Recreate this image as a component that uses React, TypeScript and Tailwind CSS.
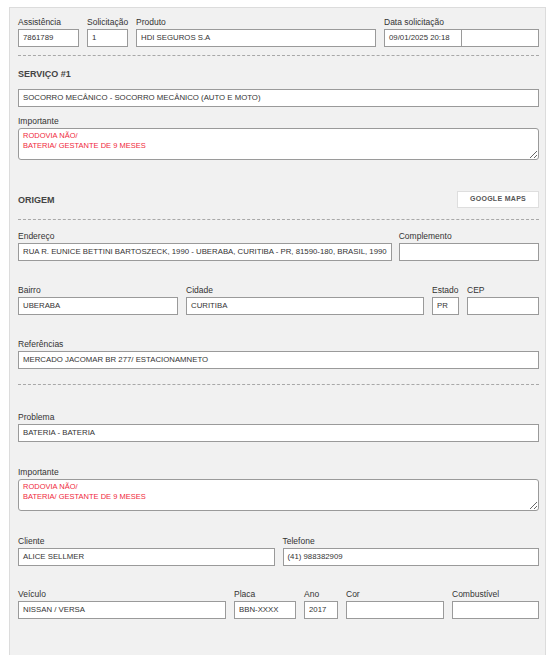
const font = { fontFamily: '"Liberation Sans", Arial, sans-serif' };

function Label({ children }: { children?: React.ReactNode }) {
  return (
    <div className="h-[13px] text-[8.5px] leading-[13px] text-[#333] whitespace-nowrap">
      {children}
    </div>
  );
}

function Box({ value, className = "" }: { value?: string; className?: string }) {
  return (
    <div
      className={`h-[18px] border border-[#9a9a9a] bg-white px-[4px] text-[7.8px] leading-[16px] text-[#333] whitespace-nowrap overflow-hidden ${className}`}
    >
      {value}
    </div>
  );
}

function Field({
  label,
  value,
  className = "",
}: {
  label?: string;
  value?: string;
  className?: string;
}) {
  return (
    <div className={`flex flex-col ${className}`}>
      <Label>{label}</Label>
      <Box value={value} />
    </div>
  );
}

function Important({ className = "" }: { className?: string }) {
  return (
    <div className={className}>
      <Label>Importante</Label>
      <textarea
        readOnly
        defaultValue={"RODOVIA NÃO/\nBATERIA/ GESTANTE DE 9 MESES"}
        className="block h-[32px] w-full resize-y rounded-[3px] border border-[#9a9a9a] bg-white px-[4px] pt-[2px] text-[7.5px] leading-[10px] text-[#f0283c] outline-none"
        style={font}
      />
    </div>
  );
}

function Dashed({ className = "" }: { className?: string }) {
  return <div className={`border-t border-dashed border-[#a8a8a8] ${className}`} />;
}

export default function App() {
  return (
    <div className="min-h-screen bg-white pl-[9px] pr-[6px] pt-[7px]" style={font}>
      <div className="min-h-[660px] border border-[#dcdcdc] bg-[#f1f1f1] pl-[8px] pr-[6px] pt-[8px]">
        {/* Header */}
        <div className="flex gap-[8px]">
          <Field label="Assistência" value="7861789" className="w-[61px]" />
          <Field label="Solicitação" value="1" className="w-[41px]" />
          <Field label="Produto" value="HDI SEGUROS S.A" className="flex-1" />
          <div className="flex w-[155px] flex-col">
            <Label>Data solicitação</Label>
            <div className="flex">
              <Box value="09/01/2025 20:18" className="w-[78px]" />
              <Box className="flex-1 border-l-0" />
            </div>
          </div>
        </div>

        <Dashed className="mt-[8px]" />

        {/* Serviço */}
        <div className="mt-[12px] h-[12px] text-[9px] font-bold leading-[12px] text-[#444]">
          SERVIÇO #1
        </div>
        <Box value="SOCORRO MECÂNICO - SOCORRO MECÂNICO (AUTO E MOTO)" className="mt-[9px]" />
        <Important className="mt-[8px]" />

        {/* Origem */}
        <div className="mt-[31px] flex items-center justify-between">
          <div className="text-[9px] font-bold leading-[12px] text-[#444]">ORIGEM</div>
          <div className="flex h-[17px] w-[82px] items-center justify-center border border-[#dedede] bg-white text-[7px] font-bold tracking-[0.3px] text-[#555]">
            GOOGLE MAPS
          </div>
        </div>

        <Dashed className="mt-[11px]" />

        <div className="mt-[10px] flex gap-[7px]">
          <Field
            label="Endereço"
            value="RUA R. EUNICE BETTINI BARTOSZECK, 1990 - UBERABA, CURITIBA - PR, 81590-180, BRASIL, 1990"
            className="flex-1"
          />
          <Field label="Complemento" className="w-[141px]" />
        </div>

        <div className="mt-[23px] flex gap-[8px]">
          <Field label="Bairro" value="UBERABA" className="w-[160px]" />
          <Field label="Cidade" value="CURITIBA" className="flex-1" />
          <Field label="Estado" value="PR" className="w-[27px]" />
          <Field label="CEP" className="w-[72px]" />
        </div>

        <Field label="Referências" value="MERCADO JACOMAR BR 277/ ESTACIONAMNETO" className="mt-[23px]" />

        <Dashed className="mt-[15px]" />

        <Field label="Problema" value="BATERIA - BATERIA" className="mt-[26px]" />
        <Important className="mt-[24px]" />

        <div className="mt-[24px] flex gap-[8px]">
          <Field label="Cliente" value="ALICE SELLMER" className="flex-1" />
          <Field label="Telefone" value="(41) 988382909" className="flex-1" />
        </div>

        <div className="mt-[22px] flex gap-[8px]">
          <Field label="Veículo" value="NISSAN / VERSA" className="w-[208px]" />
          <Field label="Placa" value="BBN-XXXX" className="w-[62px]" />
          <Field label="Ano" value="2017" className="w-[34px]" />
          <Field label="Cor" className="w-[98px]" />
          <Field label="Combustível" className="flex-1" />
        </div>
      </div>
    </div>
  );
}
